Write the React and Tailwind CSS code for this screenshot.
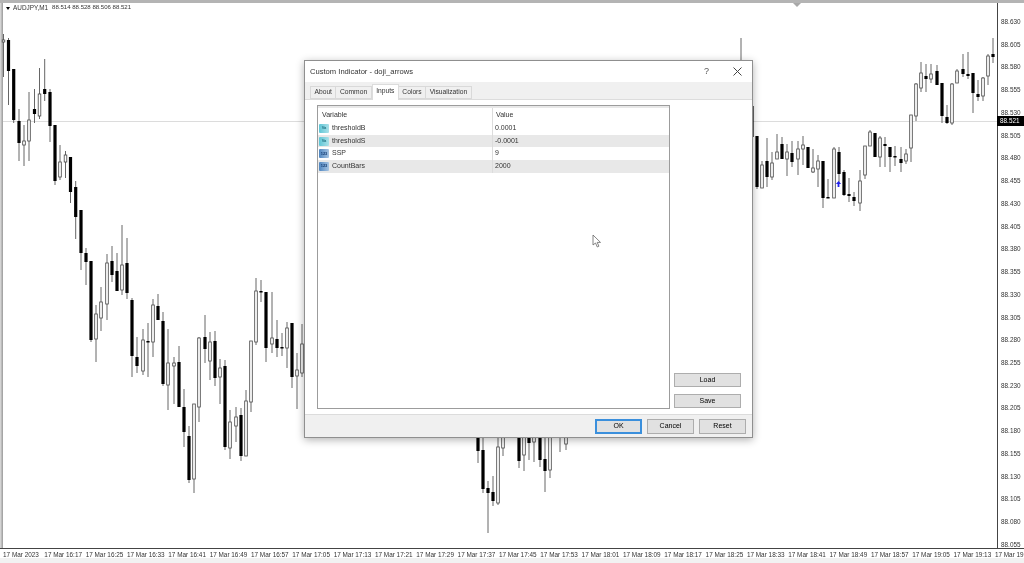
import React from 'react';

// x, wick top, wick bottom, body top, body bottom, hollow
const candles = [
  [3.5, 34, 77, 40, 42, 1], [8.5, 38, 105, 40, 71, 0], [13.7, 69, 123, 69, 120, 0], [19, 109, 161, 121, 143, 0],
  [24, 125, 166, 141, 145, 1], [29, 92, 161, 120, 141, 1], [34.5, 89, 123, 109, 114, 0], [39.5, 68, 119, 94, 116, 1],
  [44.7, 59, 101, 89, 94, 0], [50, 89, 142, 92, 126, 0], [55, 125, 185, 125, 181, 0], [60, 145, 180, 162, 177, 1],
  [65.5, 151, 178, 155, 162, 1], [70.5, 157, 203, 157, 192, 0], [75.7, 181, 239, 187, 217, 0], [81, 210, 270, 210, 253, 0],
  [86, 248, 285, 253, 262, 0], [91, 261, 342, 261, 340, 0], [96, 305, 362, 314, 339, 1], [101, 287, 331, 302, 318, 1],
  [107, 254, 320, 263, 304, 1], [112, 246, 282, 261, 275, 0], [117, 253, 291, 271, 291, 0], [122, 225, 295, 265, 290, 1],
  [127, 238, 299, 263, 293, 0], [132, 298, 377, 300, 356, 0], [137, 337, 373, 357, 366, 0], [143, 329, 375, 340, 371, 1],
  [148, 323, 377, 341, 342, 0], [153, 299, 357, 305, 342, 1], [158, 294, 320, 306, 320, 0], [163, 312, 386, 321, 384, 0],
  [168, 329, 410, 363, 385, 1], [174, 357, 404, 363, 366, 1], [179, 346, 407, 362, 407, 0], [184, 389, 447, 407, 432, 0],
  [189, 426, 483, 436, 480, 0], [194, 404, 493, 404, 479, 1], [199, 337, 422, 338, 407, 1], [205, 315, 363, 337, 349, 0],
  [210, 332, 380, 342, 361, 1], [215, 331, 386, 341, 378, 0], [220, 359, 404, 368, 377, 1], [225, 360, 450, 366, 447, 0],
  [230, 410, 459, 422, 448, 1], [236, 407, 442, 417, 426, 1], [241, 408, 461, 415, 456, 0], [246, 390, 456, 401, 456, 1],
  [251, 341, 412, 341, 402, 1], [256, 278, 345, 291, 342, 1], [261, 280, 302, 291, 292, 0], [266, 292, 362, 292, 348, 0],
  [272, 292, 353, 338, 344, 1], [277, 320, 357, 339, 348, 0], [282, 333, 356, 347, 348, 0], [287, 322, 368, 328, 348, 1],
  [292, 323, 388, 323, 377, 0], [297, 353, 409, 370, 376, 1], [302, 324, 377, 344, 373, 1],
  // under the dialog only the tails show
  [478, 430, 463, 430, 451, 0], [483, 430, 493, 450, 489, 0], [488, 481, 533, 488, 493, 0], [493, 476, 506, 492, 501, 0],
  [498, 430, 505, 447, 503, 1], [503, 430, 456, 430, 448, 1], [519, 430, 468, 430, 461, 0], [524, 430, 471, 430, 455, 1],
  [529, 430, 460, 430, 443, 0], [534, 430, 462, 430, 442, 1], [540, 430, 467, 430, 460, 0], [545, 430, 492, 459, 471, 0],
  [550, 430, 478, 430, 470, 1], [560, 430, 452, 430, 432, 1], [566, 430, 450, 430, 444, 1],
  [741, 38, 70, 62, 70, 0],
  [752, 100, 140, 106, 137, 0], [757, 136, 189, 136, 187, 0], [762, 161, 188, 165, 188, 1], [767, 138, 187, 161, 177, 0],
  [772, 152, 180, 163, 177, 1], [777, 134, 159, 152, 159, 1], [782, 137, 159, 144, 159, 0], [787, 144, 176, 152, 159, 1],
  [792, 141, 167, 153, 162, 0], [798, 141, 175, 149, 159, 1], [803, 136, 165, 145, 149, 1], [808, 147, 168, 147, 168, 0],
  [813, 149, 173, 168, 172, 1], [818, 155, 187, 161, 169, 1], [823, 161, 208, 161, 198, 0], [828, 179, 198, 197, 198, 0],
  [834, 147, 198, 149, 198, 1], [839, 147, 183, 152, 174, 0], [844, 170, 196, 172, 195, 0], [849, 178, 202, 194, 196, 0],
  [854, 192, 206, 197, 201, 0], [860, 170, 211, 181, 203, 1], [865, 146, 179, 146, 175, 1], [870, 130, 146, 132, 146, 1],
  [875, 133, 157, 133, 157, 0], [880, 136, 167, 138, 157, 1], [885, 137, 167, 144, 146, 0], [890, 147, 172, 147, 157, 0],
  [895, 146, 166, 156, 157, 0], [901, 147, 172, 159, 163, 0], [906, 149, 164, 154, 161, 1], [911, 115, 162, 115, 148, 1],
  [916, 83, 121, 84, 116, 1], [921, 62, 92, 73, 88, 1], [926, 64, 92, 76, 79, 0], [931, 64, 83, 74, 79, 1],
  [937, 65, 85, 71, 85, 0], [942, 83, 123, 83, 116, 0], [947, 105, 124, 117, 123, 0], [952, 83, 125, 84, 123, 1],
  [957, 69, 83, 71, 83, 1], [963, 54, 77, 69, 74, 0], [968, 52, 79, 74, 76, 0], [973, 73, 113, 73, 93, 0],
  [978, 80, 101, 94, 97, 0], [983, 77, 101, 78, 96, 1], [988, 54, 85, 56, 76, 1], [993, 38, 63, 54, 57, 0],
];

const prices = ['88.630', '88.605', '88.580', '88.555', '88.530', '88.505', '88.480', '88.455', '88.430', '88.405', '88.380', '88.355', '88.330', '88.305', '88.280', '88.255', '88.230', '88.205', '88.180', '88.155', '88.130', '88.105', '88.080', '88.055'];

const times = ['17 Mar 2023', '17 Mar 16:17', '17 Mar 16:25', '17 Mar 16:33', '17 Mar 16:41', '17 Mar 16:49', '17 Mar 16:57', '17 Mar 17:05', '17 Mar 17:13', '17 Mar 17:21', '17 Mar 17:29', '17 Mar 17:37', '17 Mar 17:45', '17 Mar 17:53', '17 Mar 18:01', '17 Mar 18:09', '17 Mar 18:17', '17 Mar 18:25', '17 Mar 18:33', '17 Mar 18:41', '17 Mar 18:49', '17 Mar 18:57', '17 Mar 19:05', '17 Mar 19:13', '17 Mar 19:'];

const inputs = [
  { name: 'thresholdB', value: '0.0001', kind: 'va' },
  { name: 'thresholdS', value: '-0.0001', kind: 'va', shaded: true },
  { name: 'SSP', value: '9', kind: 'num' },
  { name: 'CountBars', value: '2000', kind: 'num', shaded: true },
];

const tabs = ['About', 'Common', 'Inputs', 'Colors', 'Visualization'];

function Candles() {
  return (
    <svg width="1024" height="548" className="absolute left-0 top-0">
      <line x1="3" x2="997" y1="121.5" y2="121.5" stroke="#dcdcdc" />
      {candles.map(([x, wt, wb, bt, bb, hollow], i) => (
        <g key={i}>
          <line x1={x} x2={x} y1={wt} y2={wb} stroke="#666" strokeWidth="1" />
          {hollow ? (
            <rect x={x - 1.3} y={bt} width="2.6" height={Math.max(bb - bt, 2)} fill="#fff" stroke="#444" strokeWidth="0.8" />
          ) : (
            <rect x={x - 1.6} y={bt} width="3.2" height={Math.max(bb - bt, 1.5)} fill="#000" />
          )}
        </g>
      ))}
      <path d="M838.5 181l2.6 3h-1.7v3h-1.8v-3h-1.7z" fill="#2222ee" />
      <path d="M793 3h8l-4 4z" fill="#a8a8a8" />
    </svg>
  );
}

function ChartWindow() {
  return (
    <div className="relative flex h-[563px] w-[1024px] flex-col overflow-hidden bg-white text-[#333]">
      <div className="h-[3px] shrink-0 bg-[#b4b4b4]" />
      <div className="flex min-h-0 flex-1">
        <div className="w-[3px] shrink-0 bg-gradient-to-r from-[#e0e0e0] to-[#9a9a9a]" />
        <div className="flex h-[10px] flex-1 items-center gap-[2px] pl-[3px] text-[6.4px]">
          <span className="h-0 w-0 border-x-[2.5px] border-t-[3px] border-x-transparent border-t-black" />
          <span className="ml-[1px]">AUDJPY,M1</span>
          <span className="ml-[2px] text-[6.05px]">88.514 88.528 88.506 88.521</span>
        </div>
        <div className="flex h-[545px] w-[27px] shrink-0 flex-col border-l border-[#444] pl-[3px] pt-[14px] text-[6.4px]">
          {prices.map((p) => (
            <div key={p} className="flex h-[22.74px] shrink-0 items-start leading-[10px]">{p}</div>
          ))}
        </div>
      </div>
      <div className="flex h-[10px] shrink-0 border-t border-[#444] pl-[3px] text-[6.4px] leading-[9px]">
        {times.map((t) => (
          <div key={t} className="w-[41.33px] shrink-0 whitespace-nowrap pt-[1px]">{t}</div>
        ))}
      </div>
      <div className="h-[5px] shrink-0 bg-[#f2f2f2]" />
      <Candles />
      <div className="absolute left-[997px] top-[116px] flex h-[10px] w-[27px] items-center bg-black pl-[3px] text-[6.4px] text-white">88.521</div>
    </div>
  );
}

function VarIcon({ kind }) {
  const tone = kind === 'va' ? 'from-[#5cc6d6] to-[#a8e0e8] text-[#1d6f80]' : 'from-[#4f86c0] to-[#a6c4e2] text-[#123a70]';
  return (
    <span className={`flex h-[9px] w-[10px] shrink-0 items-center justify-center rounded-[1px] bg-gradient-to-r text-[4px] font-bold leading-none ${tone}`}>
      {kind === 'va' ? 'Va' : '123'}
    </span>
  );
}

function Button({ children, primary, className = '' }) {
  return (
    <div className={`flex items-center justify-center bg-[#e1e1e1] text-[7px] ${primary ? 'border-2 border-[#3a8fdc]' : 'border border-[#adadad]'} ${className}`}>
      {children}
    </div>
  );
}

function Dialog() {
  return (
    <div className="absolute left-[304px] top-[60px] flex h-[378px] w-[449px] flex-col border border-[#8f8f8f] bg-[#f0f0f0] shadow-[0_2px_8px_rgba(0,0,0,0.3)]">
      <div className="flex h-[21px] shrink-0 items-center bg-white pl-[5px] pr-[10px] text-[7.6px] text-[#333]">
        <span className="flex-1">Custom Indicator - doji_arrows</span>
        <span className="mr-[24px] text-[9px] text-[#555]">?</span>
        <svg width="9" height="9" viewBox="0 0 9 9" stroke="#444" strokeWidth="1">
          <path d="M.5.5l8 8M8.5.5l-8 8" />
        </svg>
      </div>
      <div className="flex h-[17px] shrink-0 items-end pl-[5px] text-[6.7px] text-[#333]">
        {tabs.map((t) => (
          <div
            key={t}
            className={t === 'Inputs'
              ? 'z-10 -mb-[1px] flex h-[16px] items-center border-x border-t border-[#dcdcdc] bg-white px-[3.5px] pb-[2px]'
              : 'flex h-[13px] items-center border border-l-0 border-[#d9d9d9] bg-[#f0f0f0] px-[3.5px] first:border-l'}
          >
            {t}
          </div>
        ))}
      </div>
      <div className="flex h-[316px] shrink-0 gap-[4px] border-y border-[#dcdcdc] bg-white pl-[12px] pr-[6px] pt-[5px]">
        <div className="h-[304px] w-[353px] shrink-0 border border-[#9c9c9c] text-[7px] text-[#333]">
          <div className="flex h-[16px] border-t-2 border-[#e8e8e8]">
            <div className="flex w-[175px] items-center border-r border-[#dcdcdc] pl-[4px]">Variable</div>
            <div className="flex flex-1 items-center pl-[3px]">Value</div>
          </div>
          {inputs.map((row) => (
            <div key={row.name} className={`flex h-[12.7px] ${row.shaded ? 'bg-[#e8e8e8]' : 'bg-white'}`}>
              <div className="flex w-[175px] items-center gap-[3px] border-r border-[#dcdcdc] pl-[1px]">
                <VarIcon kind={row.kind} />
                <span>{row.name}</span>
              </div>
              <div className="flex flex-1 items-center pl-[2px]">{row.value}</div>
            </div>
          ))}
        </div>
        <div className="flex w-[67px] shrink-0 flex-col gap-[7px] pt-[268px]">
          <Button className="h-[14px]">Load</Button>
          <Button className="h-[14px]">Save</Button>
        </div>
      </div>
      <div className="flex flex-1 items-center justify-end gap-[5px] pr-[6px]">
        <Button primary className="h-[15px] w-[47px]">OK</Button>
        <Button className="h-[15px] w-[47px]">Cancel</Button>
        <Button className="h-[15px] w-[47px]">Reset</Button>
      </div>
      {/* mouse pointer sits on top of the page */}
      <svg width="10" height="14" viewBox="0 0 10 14" className="absolute left-[287px] top-[173px]">
        <path d="M1 1v10l2.5-2 1.8 4 1.6-.8-1.7-3.8H8.5z" fill="#fff" stroke="#666" strokeWidth=".8" />
      </svg>
    </div>
  );
}

export default function App() {
  return (
    <div className="relative h-[563px] w-[1024px] overflow-hidden blur-[0.3px] font-['Liberation_Sans',Arial,sans-serif]">
      <ChartWindow />
      <Dialog />
    </div>
  );
}
